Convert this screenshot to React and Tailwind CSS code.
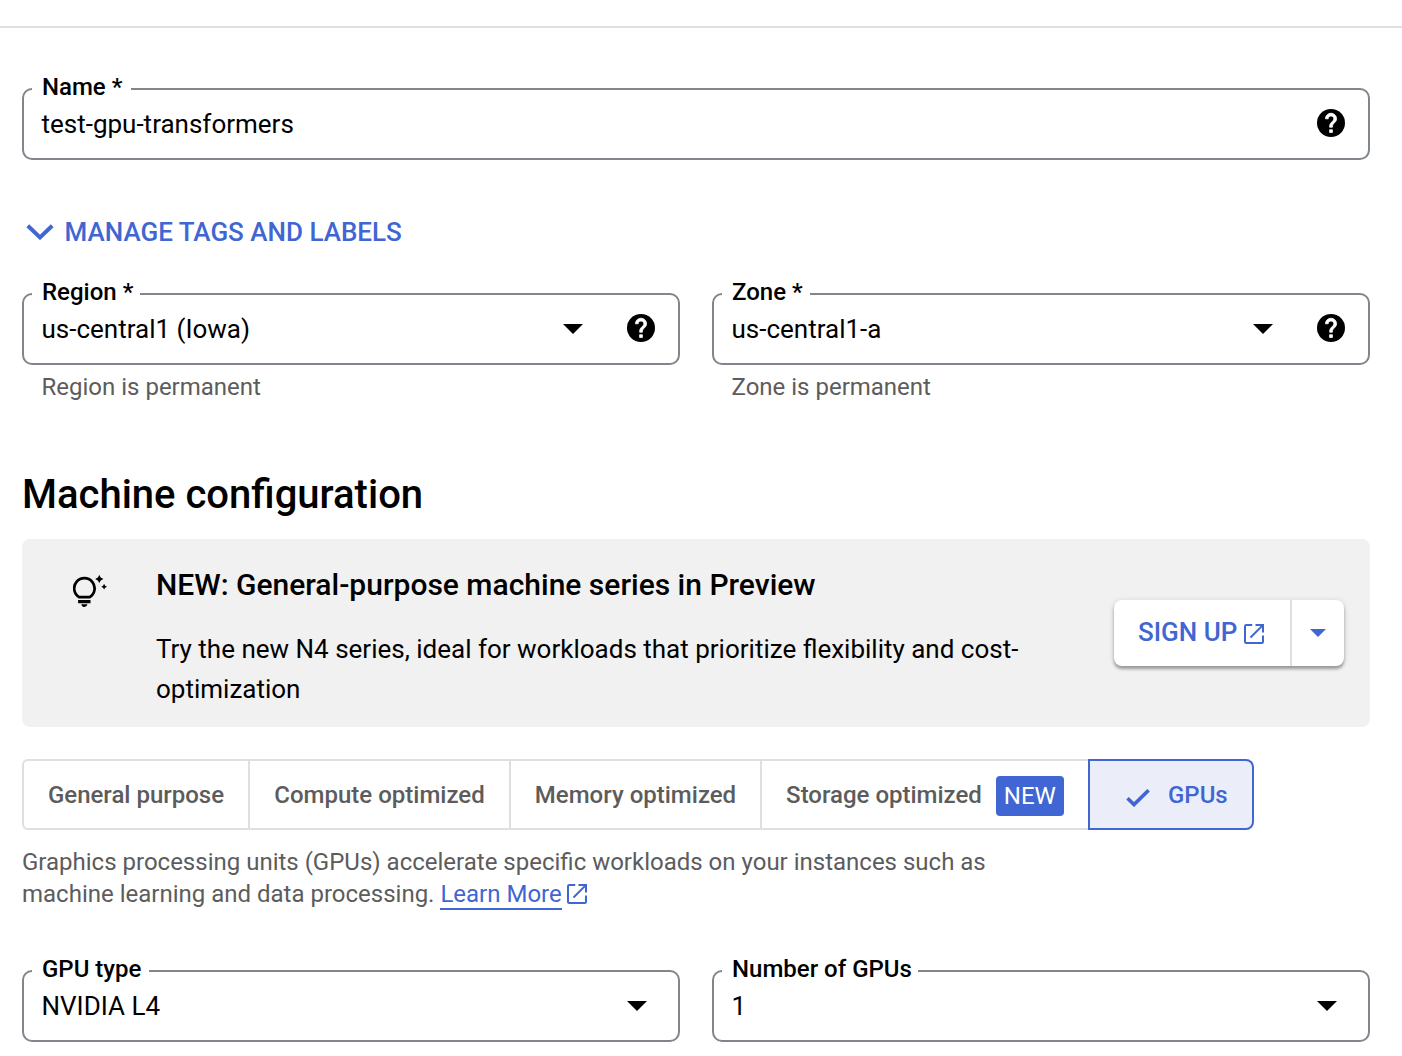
import React from "react";

function Caret({ className }) {
  return (
    <svg viewBox="0 0 20 10" className={className} fill="currentColor">
      <path d="M0 0h20L10 10z" />
    </svg>
  );
}

function OpenIcon({ className }) {
  return (
    <svg viewBox="0 0 20 20" className={className} fill="none" stroke="currentColor" strokeWidth="2">
      <path d="M8.2 1H2.2Q1 1 1 2.2V17.800Q1 19 2.200 19H17.800Q19 19 19 17.800V11.600" />
      <path d="M11.500 1H19V8.500M18.600 1.400L6.500 13.500" />
    </svg>
  );
}

function ChevronIcon({ className }) {
  return (
    <svg viewBox="0 0 28 16" className={className} fill="none" stroke="currentColor" strokeWidth="4">
      <path d="M1.800 1.800L14 13.400L26.200 1.800" />
    </svg>
  );
}

function CheckIcon({ className }) {
  return (
    <svg viewBox="0 0 24 18" className={className} fill="none" stroke="currentColor" strokeWidth="3.600">
      <path d="M1.500 9.300L8 15.600L22.600 1.200" />
    </svg>
  );
}

function BulbIcon() {
  return (
    <svg viewBox="0 0 34 34" className="h-[34px] w-[34px]" fill="currentColor">
      <path
        d="M6.400 22.200A10.200 10.200 0 1 1 16.400 22.200Z"
        fill="none"
        stroke="currentColor"
        strokeWidth="2.700"
      />
      <path d="M5.100 25h12.400v3.200H5.100zM8.300 29.200h6.200q-.6 2.800-3.100 2.800t-3.100-2.800z" />
      <path d="M26.300-.1l1.400 2.700 2.700 1.400-2.700 1.400-1.400 2.700-1.400-2.700-2.700-1.400 2.700-1.400zM31.100 8.800l1 1.900 1.900 1-1.900 1-1 1.900-1-1.900-1.900-1 1.900-1z" />
    </svg>
  );
}

function Help() {
  return (
    <svg viewBox="2 2 20 20" className="-mt-[2px] h-7 w-7">
      <circle cx="12" cy="12" r="10" />
      <path
        d="M13 18.800h-2v-2h2v2zm2.070-7.550l-.9.920C13.450 12.900 13 13.500 13 15h-2v-.5c0-1.100.45-2.100 1.170-2.830l1.240-1.260c.37-.36.590-.86.590-1.410 0-1.100-.9-2-2-2s-2 .9-2 2H8c0-2.210 1.790-4 4-4s4 1.790 4 4c0 .88-.36 1.680-.93 2.250z"
        fill="#fff"
        stroke="#fff"
        strokeWidth="0.550"
      />
    </svg>
  );
}

function Field({ label, value, gap, caret, help, helper }) {
  return (
    <div className="min-w-0 flex-1">
      <div className="relative flex h-[72px] items-center rounded-[10px] border-2 border-[#80868b] pl-[17.5px] pr-[23px]">
        <div className={`absolute -top-[17px] left-2 h-7 bg-white pl-[10px] text-2xl leading-7 font-medium whitespace-nowrap ${gap}`}>
          {label}
        </div>
        <span className="flex-1 text-[26px] leading-8">{value}</span>
        {caret && <Caret className={help ? "mr-11 h-[10px] w-5" : "mr-[8px] h-[10px] w-5"} />}
        {help && <Help />}
      </div>
      {helper && <div className="mt-[6px] pl-[19.5px] text-2xl leading-8 text-[#5c5c5c]">{helper}</div>}
    </div>
  );
}

function Segment({ children, className }) {
  return (
    <div className={`flex items-center justify-center border-y-2 border-l-2 border-[#dfdfdf] text-2xl font-medium text-[#5c5c5c] ${className}`}>
      {children}
    </div>
  );
}

export default function App() {
  return (
    <div className="h-[1056px] w-[1402px] overflow-hidden bg-white font-['Roboto',sans-serif] text-black">
      <div className="h-7 border-b-2 border-[#e0e0e0]" />
      <main className="pl-[22px] pr-8 pt-[60px]">
        <Field label="Name *" value="test-gpu-transformers" gap="w-[99px]" help />

        <div className="mt-14 flex h-8 items-center text-[26px] leading-8 font-medium text-[#3f66d2]">
          <ChevronIcon className="-mt-px mr-[10.500px] ml-1 h-4 w-7" />
          MANAGE TAGS AND LABELS
        </div>

        <div className="mt-[45px] flex gap-8">
          <Field label="Region *" value="us-central1 (Iowa)" gap="w-[108px]" caret help helper="Region is permanent" />
          <Field label="Zone *" value="us-central1-a" gap="w-[88px]" caret help helper="Zone is permanent" />
        </div>

        <h2 className="mt-[67px] text-[40px] leading-[50px] font-medium">Machine configuration</h2>

        <section className="mt-[19px] flex h-[188px] rounded-lg bg-[#f1f1f1]">
          <div className="w-[134px] pl-[51px] pt-9">
            <BulbIcon />
          </div>
          <div className="flex-1 pt-[26px]">
            <h3 className="text-[30px] leading-10 font-medium">NEW: General-purpose machine series in Preview</h3>
            <p className="mt-6 text-[26px] leading-10">
              Try the new N4 series, ideal for workloads that prioritize flexibility and cost-
              <br />
              optimization
            </p>
          </div>
          <div className="mr-[26px] mt-[61px] flex h-[66px] w-[230px] rounded-lg bg-white text-[#3f66d2] shadow-[0_3px_3px_rgba(0,0,0,0.3),0_1px_6px_rgba(0,0,0,0.14)]">
            <div className="flex w-[178px] items-center border-r-2 border-[#dfdfdf] pb-[2px] pl-6 text-[26px] leading-8 font-medium">
              <span className="w-[106px] whitespace-nowrap">SIGN UP</span>
              <OpenIcon className="mt-[3px] h-5 w-5" />
            </div>
            <div className="flex flex-1 items-center justify-center">
              <Caret className="h-2 w-4" />
            </div>
          </div>
        </section>

        <div className="mt-8 flex h-[71px]">
          <Segment className="w-[226px] rounded-l-md">General purpose</Segment>
          <Segment className="w-[261px]">Compute optimized</Segment>
          <Segment className="w-[251px]">Memory optimized</Segment>
          <Segment className="w-[328px]">
            Storage optimized
            <span className="ml-[14px] mt-[2px] flex h-10 w-[68px] items-center justify-center rounded bg-[#3f66d2] font-normal text-white">
              NEW
            </span>
          </Segment>
          <div className="flex w-[166px] items-center rounded-r-lg border-2 border-[#3f66d2] bg-[#ebeef9] pl-9 text-2xl font-medium text-[#3f66d2]">
            <CheckIcon className="mr-[18px] mt-[6px] h-[18px] w-6" />
            GPUs
          </div>
        </div>

        <p className="mt-4 text-2xl leading-8 text-[#5c5c5c]">
          Graphics processing units (GPUs) accelerate specific workloads on your instances such as
          <br />
          machine learning and data processing.{" "}
          <span className="border-b-2 border-[#3f66d2] text-[#3f66d2]">Learn More</span>
          <OpenIcon className="ml-[5.500px] inline-block h-5 w-5 align-[-2px] text-[#3f66d2]" />
        </p>

        <div className="mt-[60px] flex gap-8">
          <Field label="GPU type" value="NVIDIA L4" gap="w-[117px]" caret />
          <Field label="Number of GPUs" value="1" gap="w-[196px]" caret />
        </div>
      </main>
    </div>
  );
}
